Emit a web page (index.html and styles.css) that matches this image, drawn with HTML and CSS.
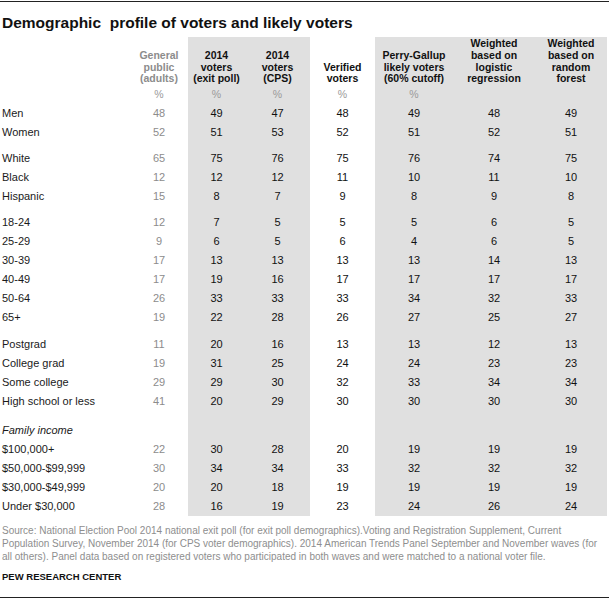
FILE: index.html
```html
<!DOCTYPE html>
<html>
<head>
<meta charset="utf-8">
<link rel="stylesheet" href="styles.css">
</head>
<body>
<div class="chart">
  <div class="rule rule-top"></div>
  <h1 class="title">Demographic&nbsp; profile of voters and likely voters</h1>
  <table class="data">
    <colgroup>
      <col class="c-label">
      <col class="c-gen">
      <col class="c-exit band">
      <col class="c-cps band">
      <col class="c-ver">
      <col class="c-perry band">
      <col class="c-log band">
      <col class="c-rf band">
    </colgroup>
    <thead>
      <tr class="head">
        <th></th>
        <th class="gen">General<br>public<br>(adults)</th>
        <th>2014<br>voters<br>(exit poll)</th>
        <th>2014<br>voters<br>(CPS)</th>
        <th>Verified<br>voters</th>
        <th>Perry-Gallup<br>likely voters<br>(60% cutoff)</th>
        <th>Weighted<br>based on<br>logistic<br>regression</th>
        <th>Weighted<br>based on<br>random<br>forest</th>
      </tr>
      <tr class="pct">
        <td></td><td>%</td><td>%</td><td>%</td><td>%</td><td>%</td><td></td><td></td>
      </tr>
    </thead>
    <tbody>
      <tr><td class="label">Men</td><td class="gen">48</td><td>49</td><td>47</td><td>48</td><td>49</td><td>48</td><td>49</td></tr>
      <tr><td class="label">Women</td><td class="gen">52</td><td>51</td><td>53</td><td>52</td><td>51</td><td>52</td><td>51</td></tr>
      <tr class="gap7"><td class="label">White</td><td class="gen">65</td><td>75</td><td>76</td><td>75</td><td>76</td><td>74</td><td>75</td></tr>
      <tr><td class="label">Black</td><td class="gen">12</td><td>12</td><td>12</td><td>11</td><td>10</td><td>11</td><td>10</td></tr>
      <tr><td class="label">Hispanic</td><td class="gen">15</td><td>8</td><td>7</td><td>9</td><td>8</td><td>9</td><td>8</td></tr>
      <tr class="gap7"><td class="label">18-24</td><td class="gen">12</td><td>7</td><td>5</td><td>5</td><td>5</td><td>6</td><td>5</td></tr>
      <tr><td class="label">25-29</td><td class="gen">9</td><td>6</td><td>5</td><td>6</td><td>4</td><td>6</td><td>5</td></tr>
      <tr><td class="label">30-39</td><td class="gen">17</td><td>13</td><td>13</td><td>13</td><td>13</td><td>14</td><td>13</td></tr>
      <tr><td class="label">40-49</td><td class="gen">17</td><td>19</td><td>16</td><td>17</td><td>17</td><td>17</td><td>17</td></tr>
      <tr><td class="label">50-64</td><td class="gen">26</td><td>33</td><td>33</td><td>33</td><td>34</td><td>32</td><td>33</td></tr>
      <tr><td class="label">65+</td><td class="gen">19</td><td>22</td><td>28</td><td>26</td><td>27</td><td>25</td><td>27</td></tr>
      <tr class="gap8"><td class="label">Postgrad</td><td class="gen">11</td><td>20</td><td>16</td><td>13</td><td>13</td><td>12</td><td>13</td></tr>
      <tr><td class="label">College grad</td><td class="gen">19</td><td>31</td><td>25</td><td>24</td><td>24</td><td>23</td><td>23</td></tr>
      <tr><td class="label">Some college</td><td class="gen">29</td><td>29</td><td>30</td><td>32</td><td>33</td><td>34</td><td>34</td></tr>
      <tr><td class="label">High school or less</td><td class="gen">41</td><td>20</td><td>29</td><td>30</td><td>30</td><td>30</td><td>30</td></tr>
      <tr class="gap10"><td class="label sub">Family income</td><td></td><td></td><td></td><td></td><td></td><td></td><td></td></tr>
      <tr><td class="label">$100,000+</td><td class="gen">22</td><td>30</td><td>28</td><td>20</td><td>19</td><td>19</td><td>19</td></tr>
      <tr><td class="label">$50,000-$99,999</td><td class="gen">30</td><td>34</td><td>34</td><td>33</td><td>32</td><td>32</td><td>32</td></tr>
      <tr><td class="label">$30,000-$49,999</td><td class="gen">20</td><td>20</td><td>18</td><td>19</td><td>19</td><td>19</td><td>19</td></tr>
      <tr><td class="label">Under $30,000</td><td class="gen">28</td><td>16</td><td>19</td><td>23</td><td>24</td><td>26</td><td>24</td></tr>
    </tbody>
  </table>
  <p class="source">Source: National Election Pool 2014 national exit poll (for exit poll demographics).Voting and Registration Supplement, Current<br>Population Survey, November 2014 (for CPS voter demographics). 2014 American Trends Panel September and November waves (for<br>all others). Panel data based on registered voters who participated in both waves and were matched to a national voter file.</p>
  <p class="org">PEW RESEARCH CENTER</p>
  <div class="rule rule-bottom"></div>
</div>
</body>
</html>
```

FILE: styles.css
```css
* { box-sizing: border-box; }
html, body { margin: 0; padding: 0; background: #fff; }
body {
  font-family: "Liberation Sans", Arial, sans-serif;
  color: #1a1a1a;
  width: 609px;
  height: 599px;
  overflow: hidden;
}
.chart { width: 609px; }
.rule { height: 1px; background: #222; }
.rule-top { margin-top: 1px; }
.rule-bottom { margin-top: 14px; }
.title {
  margin: 11px 0 4px 2px;
  font-size: 15.5px;
  line-height: 20px;
  font-weight: bold;
  color: #111;
  white-space: nowrap;
}
.data {
  border-collapse: collapse;
  border-spacing: 0;
  table-layout: fixed;
  width: 607px;
}
.c-label { width: 130px; }
.c-gen { width: 58px; }
.c-exit { width: 57px; }
.c-cps { width: 65px; }
.c-ver { width: 65px; }
.c-perry { width: 78px; }
.c-log { width: 82px; }
.c-rf { width: 72px; }
.band { background: #e0e0e0; }
.data th {
  font-size: 10.5px;
  line-height: 11.7px;
  font-weight: bold;
  vertical-align: bottom;
  text-align: center;
  padding: 1.2px 0 0 0;
  color: #111;
  white-space: nowrap;
}
.data th.gen { color: #8c8c8c; }
.data td {
  font-size: 11px;
  line-height: 19px;
  padding: 0;
  text-align: center;
  color: #111;
  white-space: nowrap;
}
.data .pct td { font-size: 10.5px; color: #9a9a9a; }
.data td.label { text-align: left; padding-left: 2px; color: #1a1a1a; }
.data td.gen { color: #8c8c8c; }
.data td.sub { font-style: italic; }
.data tr.gap7 td { padding-top: 7px; }
.data tr.gap8 td { padding-top: 8px; }
.data tr.gap10 td { padding-top: 10px; }
.source {
  margin: 8px 0 0 2px;
  font-size: 10px;
  line-height: 13px;
  color: #8e8e8e;
  white-space: nowrap;
}
.org {
  margin: 7px 0 0 2px;
  font-size: 9.5px;
  line-height: 13px;
  font-weight: bold;
  color: #111;
}
```
